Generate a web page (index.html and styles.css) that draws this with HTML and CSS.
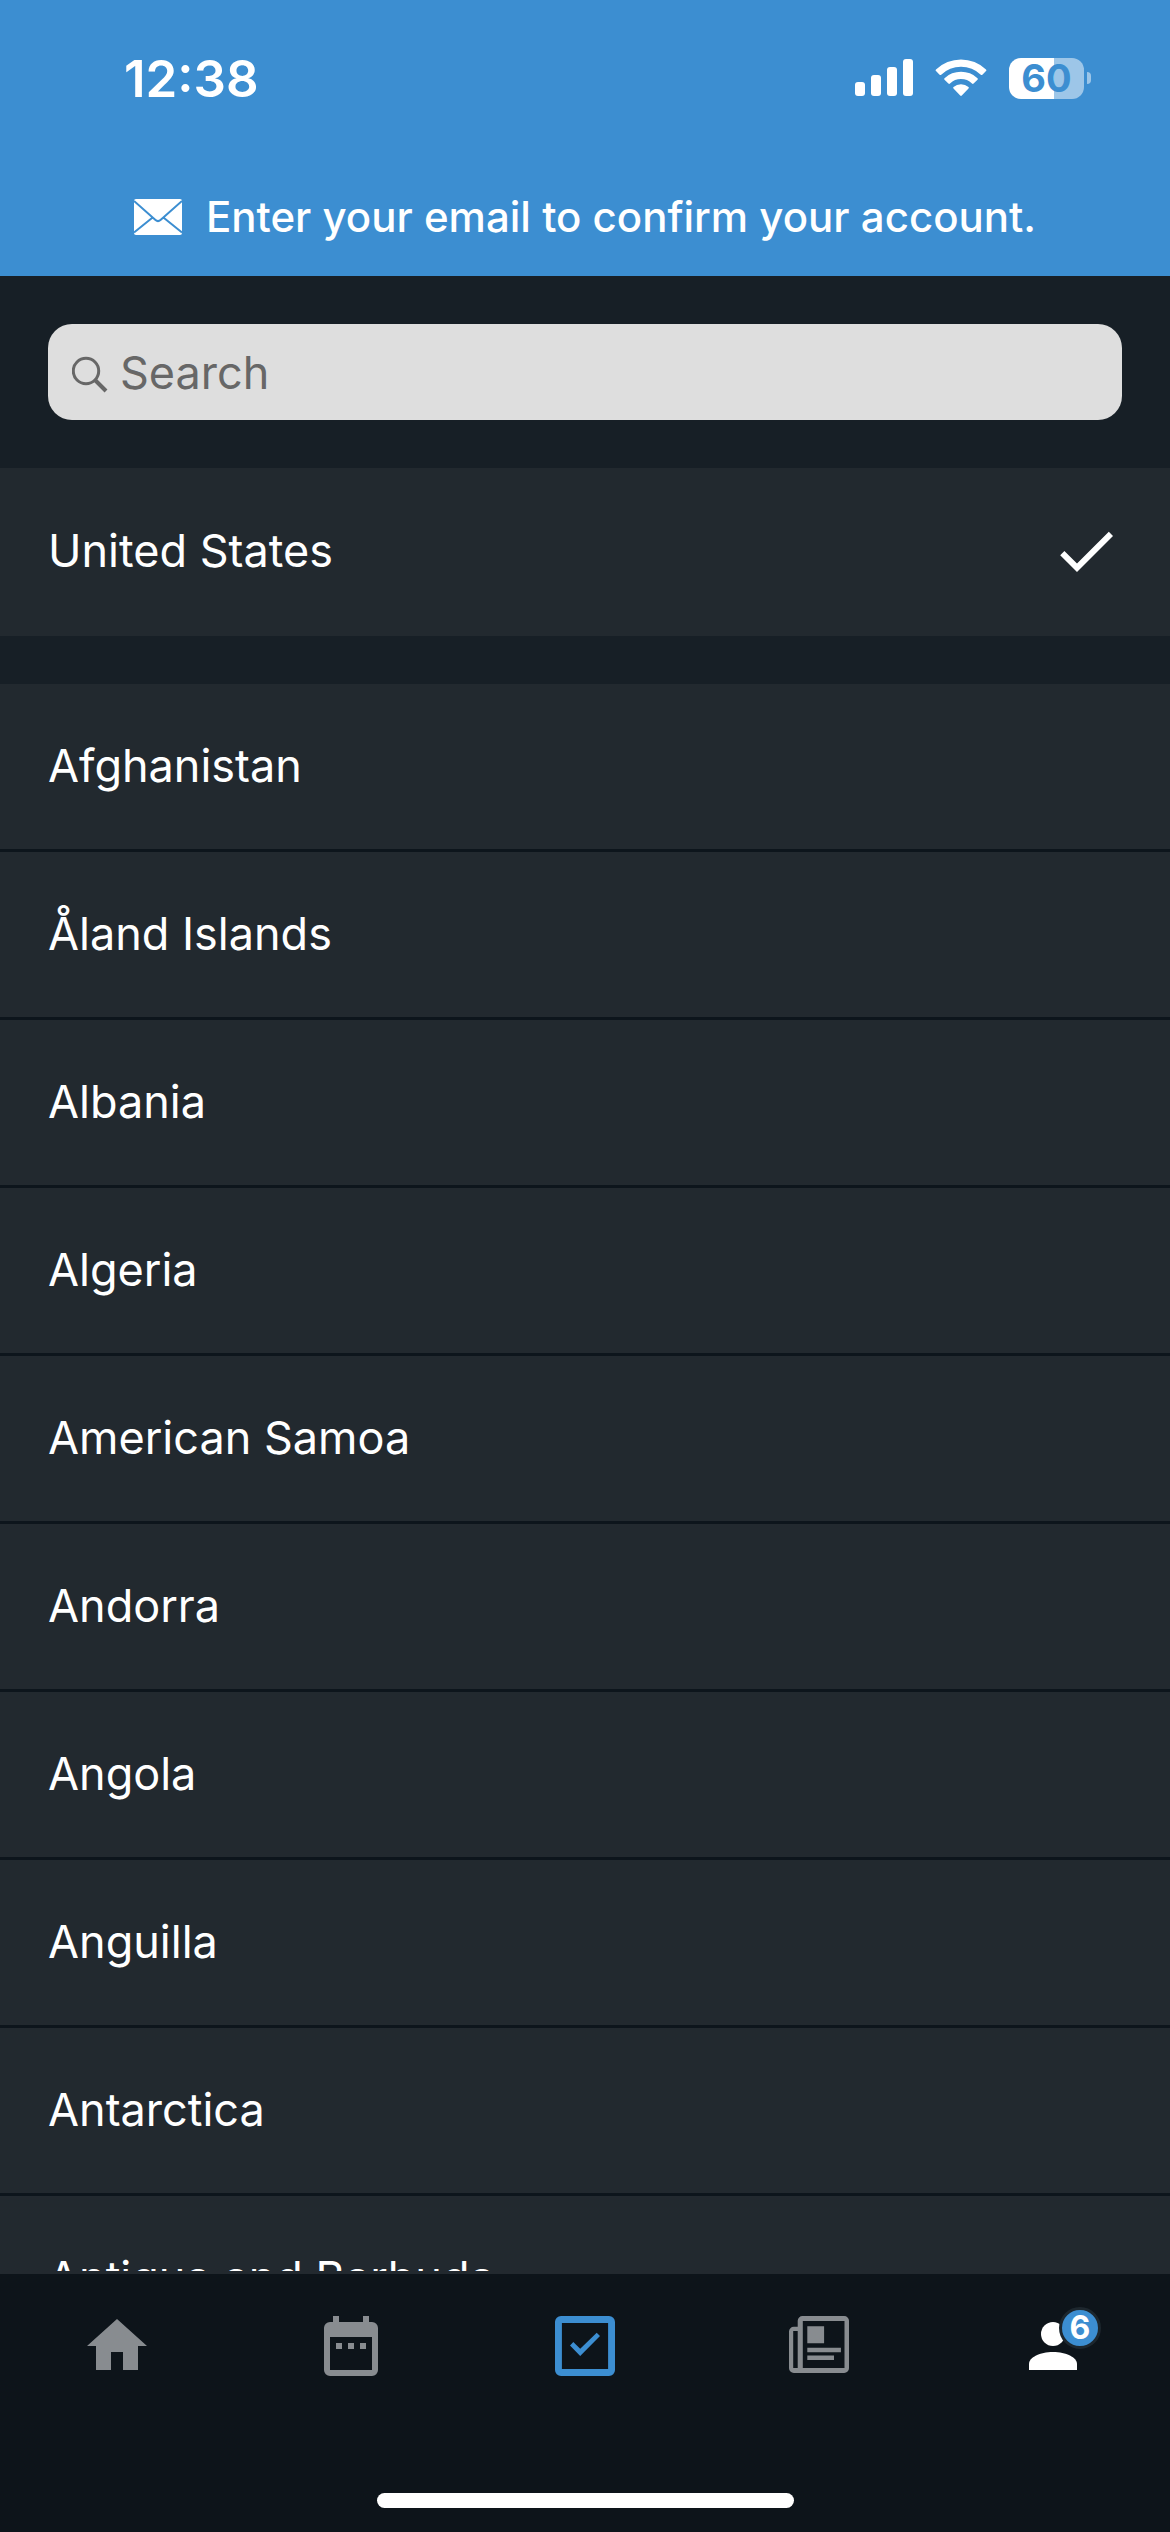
FILE: index.html
```html
<!DOCTYPE html>
<html lang="en">
<head>
    <meta charset="UTF-8">
    <meta name="viewport" content="width=device-width, initial-scale=1.0">
    <title>Select country</title>
    <link rel="stylesheet" href="styles.css">
</head>
<body>

    <header class="header">
        <div class="status-bar">
            <span class="time">12:38</span>
            <div class="status-icons">
                <svg class="signal" viewBox="0 0 58 38">
                    <rect x="0" y="23" width="10" height="14" rx="3"/>
                    <rect x="16" y="16" width="10" height="21" rx="3"/>
                    <rect x="32" y="8" width="10" height="29" rx="3"/>
                    <rect x="48" y="0" width="10" height="37" rx="3"/>
                </svg>
                <svg class="wifi" viewBox="0 0 52 38">
                    <path d="M1 10.5a36 36 0 0 1 50 0q.8.8 0 1.6l-3.600 3.600q-.8.8-1.600 0a28.500 28.500 0 0 0-39.600 0q-.8.8-1.600 0L1 12.100q-.8-.8 0-1.600z"/>
                    <path d="M9.500 19.200a24 24 0 0 1 33 0q.8.8 0 1.600L38.600 24.500q-.8.8-1.600 0a16 16 0 0 0-22 0q-.8.8-1.600 0L9.500 20.800q-.8-.8 0-1.600z"/>
                    <path d="M18.500 28a11.500 11.500 0 0 1 15 0q.8.8 0 1.600l-6.700 7q-.8.8-1.600 0l-6.700-7q-.8-.8 0-1.600z"/>
                </svg>
                <div class="battery">
                    <span class="battery-level">60</span>
                    <span class="battery-tip"></span>
                </div>
            </div>
        </div>
        <a class="banner" href="#">
            <svg class="envelope" viewBox="0 0 48 38">
                <rect y="2" width="48" height="36" rx="2"/>
                <path d="M0 4L21.500 23q2.500 2.200 5 0L48 4M0 35.500L18 21M48 35.500L30 21"/>
            </svg>
            Enter your email to confirm your account.
        </a>
    </header>

    <main class="content">
        <label class="search">
            <svg class="search-icon" viewBox="0 0 36 42">
                <circle cx="14" cy="20" r="12.700"/>
                <path d="M23 29L34 40"/>
            </svg>
            <input class="search-input" type="search" placeholder="Search" aria-label="Search">
        </label>

        <button class="country selected" type="button">
            United States
            <svg class="check" viewBox="0 0 24 24"><path d="M9 16.200L4.800 12l-1.400 1.400L9 19 21 7l-1.400-1.400L9 16.200z"/></svg>
        </button>

        <ul class="countries">
            <li><button class="country" type="button">Afghanistan</button></li>
            <li><button class="country" type="button">Åland Islands</button></li>
            <li><button class="country" type="button">Albania</button></li>
            <li><button class="country" type="button">Algeria</button></li>
            <li><button class="country" type="button">American Samoa</button></li>
            <li><button class="country" type="button">Andorra</button></li>
            <li><button class="country" type="button">Angola</button></li>
            <li><button class="country" type="button">Anguilla</button></li>
            <li><button class="country" type="button">Antarctica</button></li>
            <li><button class="country" type="button">Antigua and Barbuda</button></li>
        </ul>
    </main>

    <footer class="footer">
        <nav class="tabs">
            <a class="tab" href="#" aria-label="Home">
                <svg class="tab-icon" viewBox="0 0 24 24"><path d="M10 20v-6h4v6h5v-8h3L12 3 2 12h3v8z"/></svg>
            </a>
            <a class="tab" href="#" aria-label="Calendar">
                <svg class="tab-icon" viewBox="0 0 24 24">
                    <path fill-rule="evenodd" d="M6 2h2v2h8V2h2v2h1a2 2 0 0 1 2 2v14a2 2 0 0 1-2 2H5a2 2 0 0 1-2-2V6a2 2 0 0 1 2-2h1zM5 9v11h14V9z"/>
                    <path d="M7 11h2v2H7zM11 11h2v2h-2zM15 11h2v2h-2z"/>
                </svg>
            </a>
            <a class="tab tasks" href="#" aria-label="Tasks">
                <svg class="tab-icon" viewBox="0 0 24 24">
                    <path fill-rule="evenodd" d="M4 2h16a2 2 0 0 1 2 2v16a2 2 0 0 1-2 2H4a2 2 0 0 1-2-2V4a2 2 0 0 1 2-2zM4.300 4.300v15.400h15.400V4.300z"/>
                    <path d="M7 11.800L10.400 15.300 17 8.700 15.900 7.600 10.400 12.900 8.100 10.700z"/>
                </svg>
            </a>
            <a class="tab" href="#" aria-label="News">
                <svg class="tab-icon" viewBox="0 0 24 24">
                    <path fill-rule="evenodd" d="M6.500 2h13.900A1.600 1.600 0 0 1 22 3.600v15.800a1.600 1.600 0 0 1-1.600 1.600H3.600A1.600 1.600 0 0 1 2 19.400V7.200a1.600 1.600 0 0 1 1.600-1.600h1.300v-2A1.600 1.600 0 0 1 6.500 2zM6.600 3.700v15.600h13.900V3.700zM3.400 7v12.300h1.500V7z"/>
                    <path d="M8.100 5.400h5.600v5.700H8.100zM8.100 12.600h11.200v1.500H8.100zM8.100 15.200h8.900v1.500H8.100z"/>
                </svg>
            </a>
            <a class="tab active" href="#" aria-label="Profile">
                <svg class="tab-icon" viewBox="0 0 24 24">
                    <circle cx="12" cy="8" r="4"/>
                    <path d="M4 20v-2c0-2.200 3.600-4 8-4s8 1.800 8 4v2z"/>
                </svg>
                <span class="badge">6</span>
            </a>
        </nav>
        <div class="home-indicator"></div>
    </footer>

</body>
</html>
```
FILE: styles.css
```css
* {
    box-sizing: border-box;
}

body {
    display: flex;
    flex-direction: column;
    height: 100vh;
    margin: 0;
    background-color: #171f26;
    color: #fff;
    font-family: Inter, "Liberation Sans", sans-serif;
    font-size: 45px;
}

svg {
    display: block;
    flex: none;
    fill: currentColor;
}

/* Header */
.header {
    background-color: #3c8ed1;
}

.status-bar {
    display: flex;
    justify-content: space-between;
    align-items: center;
    height: 156px;
    padding: 0 79px 0 124px;
}

.time {
    font-size: 51px;
    font-weight: 600;
}

.status-icons {
    display: flex;
    align-items: center;
    gap: 22px;
}

.signal {
    width: 58px;
    height: 38px;
}

.wifi {
    width: 52px;
    height: 38px;
}

.battery {
    display: flex;
    align-items: center;
    gap: 3px;
}

.battery-level {
    width: 75px;
    border-radius: 12px;
    background: linear-gradient(to right, #fff 60%, #9dc6e8 60%);
    color: #3c8ed1;
    font-size: 38px;
    font-weight: 700;
    line-height: 41px;
    text-align: center;
}

.battery-tip {
    width: 4px;
    height: 12px;
    border-radius: 0 4px 4px 0;
    background-color: #9dc6e8;
}

.banner {
    display: flex;
    justify-content: center;
    align-items: center;
    gap: 24px;
    height: 120px;
    color: #fff;
    font-size: 42px;
    font-weight: 500;
    text-decoration: none;
}

.envelope {
    width: 48px;
    height: 38px;
}

.envelope path {
    fill: none;
    stroke: #3c8ed1;
    stroke-width: 2;
}

/* Country list */
.content {
    flex: 1;
    min-height: 0;
    overflow-y: auto;
    scrollbar-width: none;
}

.search {
    display: flex;
    align-items: center;
    gap: 12px;
    height: 96px;
    margin: 48px;
    padding: 0 24px;
    border-radius: 24px;
    background-color: #dedede;
    color: #676767;
}

.search-icon {
    width: 36px;
    height: 42px;
    fill: none;
    stroke: currentColor;
    stroke-width: 3;
}

.search-icon path {
    stroke-width: 4;
}

.search-input {
    flex: 1;
    min-width: 0;
    padding: 0;
    border: none;
    outline: none;
    background: none;
    color: inherit;
    font: inherit;
    appearance: none;
}

.search-input::placeholder {
    color: #676767;
}

.countries {
    margin: 48px 0 0;
    padding: 0;
    list-style: none;
}

.country {
    display: flex;
    justify-content: space-between;
    align-items: center;
    width: 100%;
    height: 168px;
    padding: 0 48px 3px;
    border: none;
    border-bottom: 3px solid #0d151c;
    background-color: #22292f;
    color: #fff;
    font: inherit;
    text-align: left;
    cursor: pointer;
}

.country.selected {
    border-bottom: none;
}

.check {
    width: 72px;
    height: 72px;
}

/* Tab bar */
.footer {
    border-top: 3px solid #22292f;
    background-color: #0d141a;
}

.tabs {
    display: flex;
    padding: 36px 0 111px;
}

.tab {
    position: relative;
    display: flex;
    flex: 1;
    justify-content: center;
    color: #888c90;
}

.tab.tasks {
    color: #3c8ed1;
}

.tab.active {
    color: #fff;
}

.tab-icon {
    width: 72px;
    height: 72px;
}

.badge {
    position: absolute;
    top: -3px;
    left: calc(50% + 6px);
    width: 42px;
    height: 42px;
    border: 3px solid #1d272e;
    border-radius: 50%;
    background-color: #3c8ed1;
    font-size: 32px;
    font-weight: 700;
    line-height: 36px;
    text-align: center;
}

.home-indicator {
    width: 417px;
    height: 15px;
    margin: 0 auto 24px;
    border-radius: 8px;
    background-color: #fff;
}
```
